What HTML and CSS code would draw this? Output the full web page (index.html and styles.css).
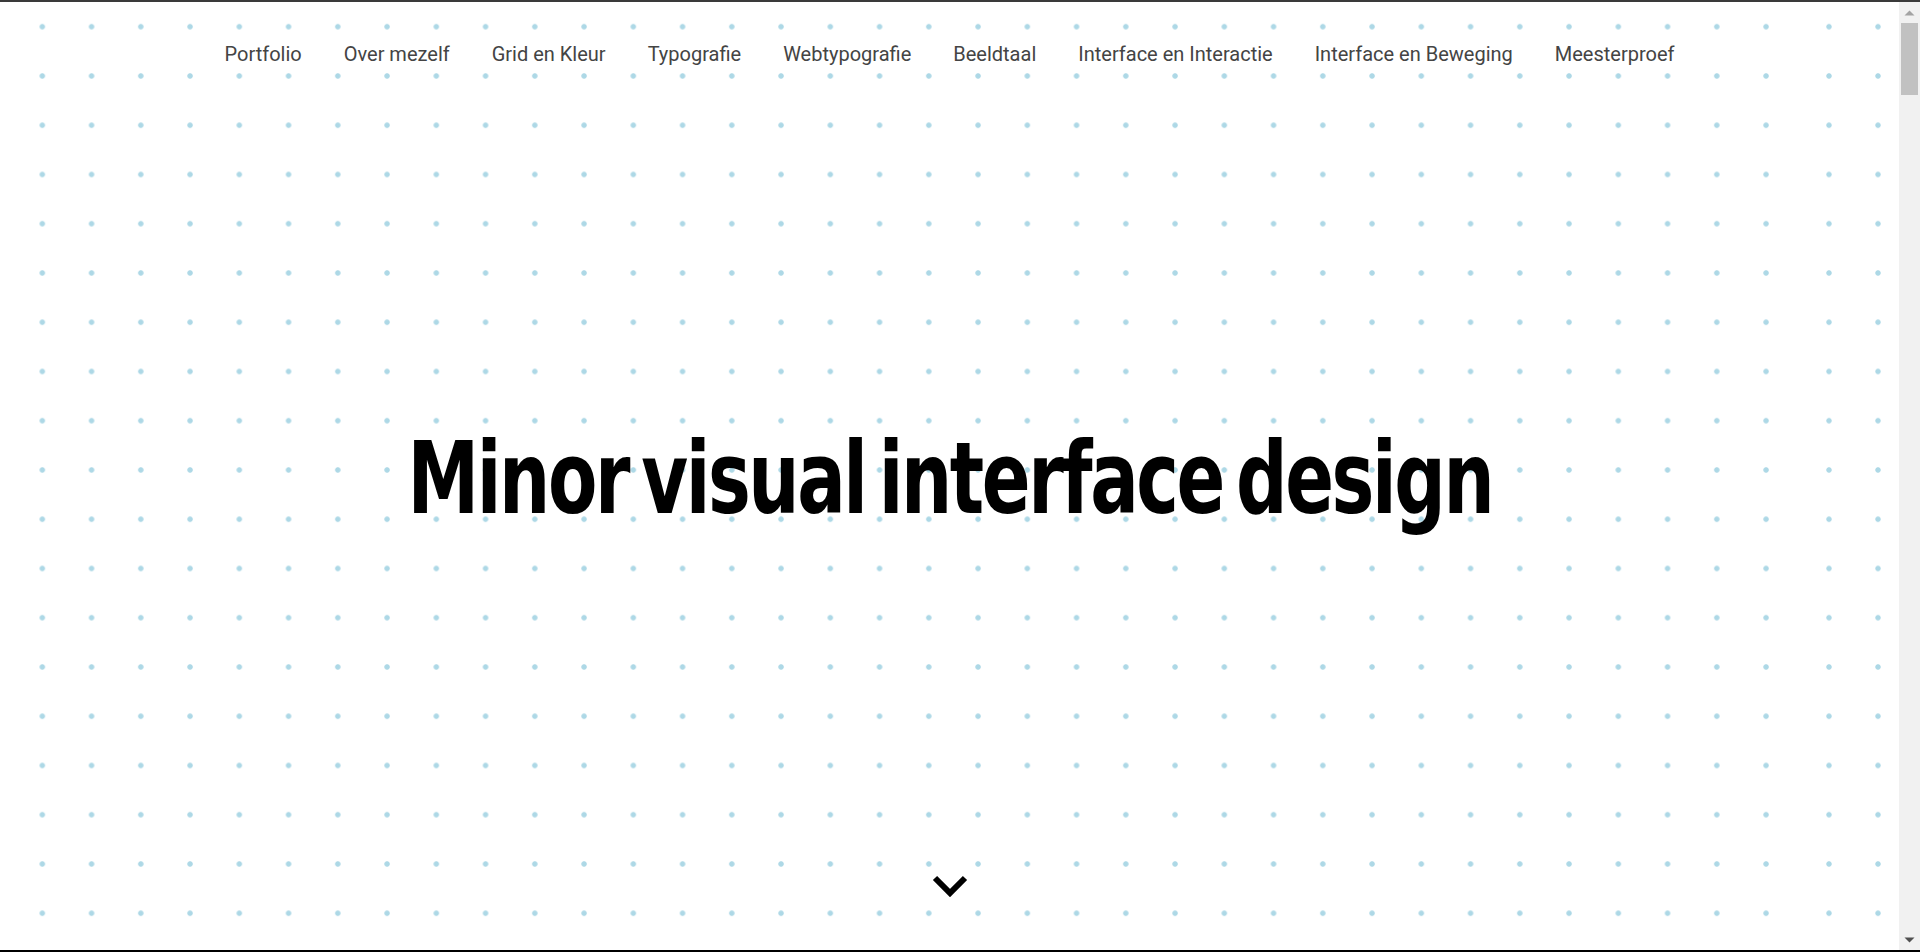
FILE: index.html
```html
<!DOCTYPE html>
<html lang="nl">
<head>
<meta charset="utf-8">
<title>Minor visual interface design</title>
<link rel="stylesheet" href="styles.css">
</head>
<body>
<div class="frame">
  <div class="window">
    <main class="page">
      <header class="hero">
        <nav class="nav">
          <a href="#portfolio">Portfolio</a>
          <a href="#over-mezelf">Over mezelf</a>
          <a href="#grid-en-kleur">Grid en Kleur</a>
          <a href="#typografie">Typografie</a>
          <a href="#webtypografie">Webtypografie</a>
          <a href="#beeldtaal">Beeldtaal</a>
          <a href="#interface-en-interactie">Interface en Interactie</a>
          <a href="#interface-en-beweging">Interface en Beweging</a>
          <a href="#meesterproef">Meesterproef</a>
        </nav>
        <h1 class="title">Minor visual interface design</h1>
        <a class="down" href="#portfolio" aria-label="Naar beneden">
          <svg width="36" height="22" viewBox="0 0 36 22"><polyline points="3,3 18,18 33,3" fill="none" stroke="#000" stroke-width="6" stroke-linejoin="miter" stroke-linecap="butt"/></svg>
        </a>
      </header>
    </main>
    <div class="scrollbar" aria-hidden="true">
      <div class="sb-btn">
        <svg width="21" height="19" viewBox="0 0 21 19"><polygon points="5.5,13.5 10.5,8.5 15.5,13.5" fill="#a3a3a3"/></svg>
      </div>
      <div class="sb-track">
        <div class="sb-thumb"></div>
      </div>
      <div class="sb-btn">
        <svg width="21" height="19" viewBox="0 0 21 19"><polygon points="5.5,6.5 15.5,6.5 10.5,11.5" fill="#505050"/></svg>
      </div>
    </div>
  </div>
</div>
</body>
</html>
```

FILE: styles.css
```css
html, body {
  margin: 0;
  padding: 0;
  height: 100%;
  overflow: hidden;
  background: #fff;
}

.frame {
  height: 100vh;
  box-sizing: border-box;
  border-top: 2px solid #3a3a3a;
  border-bottom: 2px solid #000;
  display: flex;
  flex-direction: column;
}

.window {
  flex: 1;
  min-height: 0;
  display: flex;
}

.page {
  --dot: radial-gradient(circle at center, #add8e6 0, #add8e6 2.3px, rgba(173, 216, 230, 0) 3.1px);
  flex: 1;
  min-width: 0;
  overflow: hidden;
  background-color: #fff;
  background-image:
    var(--dot),
    var(--dot),
    linear-gradient(#fff, #fff),
    var(--dot);
  background-size:
    10px 49.25px,
    10px 49.25px,
    100px 100%,
    49.25px 49.25px;
  background-position:
    1824px 0.1px,
    1873px 0.1px,
    right top,
    17.7px 0.1px;
  background-repeat:
    repeat-y,
    repeat-y,
    no-repeat,
    repeat;
}

.scrollbar {
  width: 21px;
  flex: none;
  display: flex;
  flex-direction: column;
  background: #f1f1f1;
}

.sb-btn {
  height: 19px;
  flex: none;
}

.sb-btn svg {
  display: block;
}

.sb-track {
  flex: 1;
  padding: 2px 2px 0;
}

.sb-thumb {
  height: 72px;
  background: #c1c1c1;
}

.hero {
  height: 948px;
  box-sizing: border-box;
  display: flex;
  flex-direction: column;
  align-items: center;
  padding-top: 40px;
}

.nav {
  display: flex;
  justify-content: center;
  gap: 42px;
  font-family: Roboto, "Liberation Sans", sans-serif;
  font-size: 20px;
  line-height: 24px;
}

.nav a {
  color: #444;
  text-decoration: none;
}

.title {
  margin: 363px 0 0;
  font-family: "DejaVu Sans Condensed", "DejaVu Sans", sans-serif;
  font-weight: 700;
  font-size: 100px;
  line-height: 100px;
  letter-spacing: -3px;
  word-spacing: -12px;
  color: #000;
  white-space: nowrap;
  transform: scaleX(0.8);
}

.down {
  display: block;
  margin-top: auto;
  margin-bottom: 53px;
  width: 36px;
  height: 22px;
}

.down svg {
  display: block;
}
```
